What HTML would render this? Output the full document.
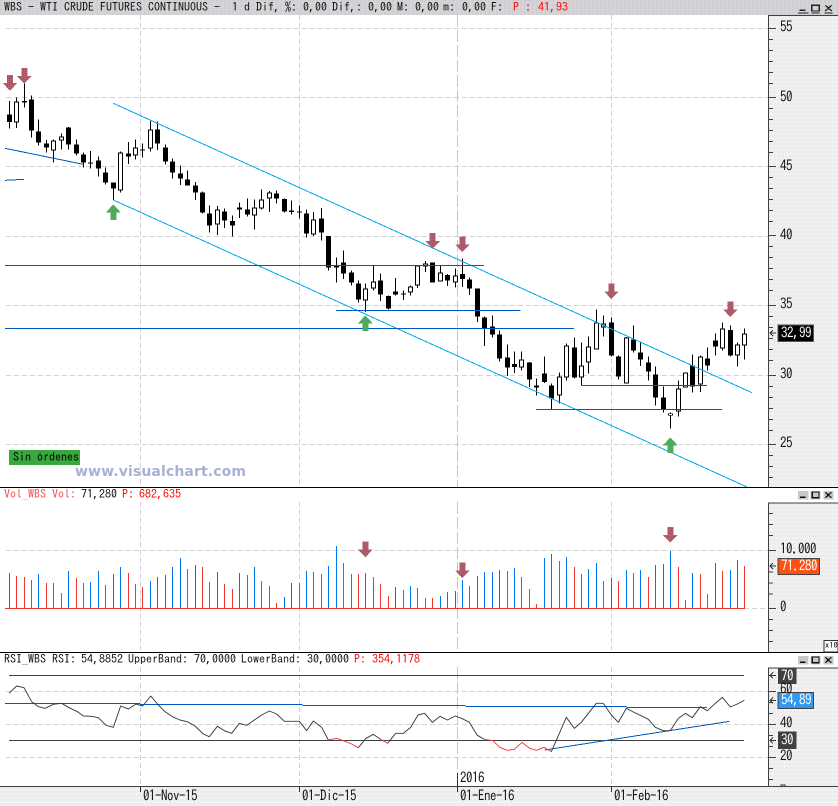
<!DOCTYPE html>
<html><head><meta charset="utf-8"><title>WBS chart</title>
<style>
html,body{margin:0;padding:0;background:#fff}
#c{position:relative;width:838px;height:806px;overflow:hidden;background:#fff}
svg{position:absolute;left:0;top:0}
.t{position:absolute;font-family:"IPAGothic","Liberation Mono",monospace;font-size:12px;line-height:14px;height:14px;white-space:pre;color:#111}
.a{font-size:13px;letter-spacing:-.5px;transform:scaleY(1.15);transform-origin:50% 50%}
.r{color:#f00}.s{color:#f05050}.w{color:#fff}
</style></head><body><div id="c">
<svg width="838" height="806" viewBox="0 0 2514 2418" shape-rendering="crispEdges">
<defs>
<pattern id="pa" patternUnits="userSpaceOnUse" width="12" height="12"><rect width="12" height="12" fill="#f0f0f2"/><rect x="3" width="3" height="3" fill="#e2e2ec"/><rect x="9" y="3" width="3" height="3" fill="#f0e4ea"/><rect y="6" width="3" height="3" fill="#fafafa"/><rect x="6" y="9" width="3" height="3" fill="#dedee6"/><rect x="6" y="3" width="3" height="3" fill="#fafafa"/></pattern>
<pattern id="pt" patternUnits="userSpaceOnUse" width="12" height="12"><rect width="12" height="12" fill="#d4d2d6"/><rect x="3" width="3" height="3" fill="#c8c8c8"/><rect x="9" y="3" width="3" height="3" fill="#dcd4e0"/><rect y="6" width="3" height="3" fill="#c8ccc8"/><rect x="6" y="9" width="3" height="3" fill="#e0dcdc"/></pattern>
<pattern id="pd" patternUnits="userSpaceOnUse" width="6" height="6"><rect width="6" height="6" fill="#a85462"/><rect width="3" height="3" fill="#c0707c"/></pattern>
<pattern id="pu" patternUnits="userSpaceOnUse" width="6" height="6"><rect width="6" height="6" fill="#44a454"/><rect width="3" height="3" fill="#68c078"/></pattern>
<polygon id="dn" points="-9,0 9,0 9,24 22,24 0,47 -22,24 -9,24" fill="url(#pd)"/>
<polygon id="up" points="0,0 22,24 9,24 9,47 -9,47 -9,24 -22,24" fill="url(#pu)"/>
</defs>
<!-- backgrounds -->
<rect x="0" y="0" width="2514" height="45" fill="url(#pt)"/>
<rect x="2304" y="45" width="210" height="1416" fill="url(#pa)"/>
<rect x="2304" y="1507" width="210" height="449" fill="url(#pa)"/>
<rect x="2304" y="2002" width="210" height="356" fill="url(#pa)"/>
<rect x="0" y="2358" width="2514" height="60" fill="url(#pa)"/>
<!-- grid -->
<path d="M18 85.5H2304M18 292.5H2304M18 499.5H2304M18 709.5H2304M18 916.5H2304M18 1126.5H2304M18 1333.5H2304M18 1651.5H2304M2232 1825.5H2304M18 2074.5H2304M18 2173.5H2304M18 2272.5H2304" fill="none" stroke="#d2d2d2" stroke-width="3" stroke-dasharray="15 9"/>
<path d="M421.5 45V1461M898.5 45V1461M1834.5 45V1461M421.5 1506V1950M898.5 1506V1950M1834.5 1506V1950M421.5 2001V2358M898.5 2001V2358M1834.5 2001V2358" fill="none" stroke="#d4ccd6" stroke-width="3" stroke-dasharray="15 9"/>
<path d="M1372.5 45V1461M1372.5 1506V1950M1372.5 2001V2358" fill="none" stroke="#c6c6c6" stroke-width="3" stroke-dasharray="36 9"/>
<!-- wicks -->
<path fill="none" stroke="#000" stroke-width="3" d="M28.5 303V386M49.5 292V384M73.5 250V323M94.5 286V413M115.5 358V437M139.5 420V458M160.5 418V488M184.5 400V449M205.5 381V449M229.5 418V467M250.5 458V503M271.5 453V506M295.5 469V530M316.5 502V554M340.5 547V600M361.5 455V578M385.5 426V492M406.5 418V479M427.5 430V473M451.5 363V455M472.5 365V450M496.5 433V494M517.5 475V536M541.5 496V555M562.5 511V557M586.5 546V600M607.5 574V640M628.5 616V698M652.5 618V705M673.5 626V684M697.5 646V709M718.5 608V654M742.5 595V650M763.5 598V689M784.5 568V628M808.5 573V636M829.5 571V611M853.5 595V637M874.5 601V644M898.5 616V656M919.5 628V713M940.5 636V708M964.5 624V722M985.5 708V812M1009.5 772V848M1030.5 751V837M1054.5 812V857M1075.5 841V908M1096.5 850V936M1120.5 796V872M1141.5 820V903M1165.5 886V929M1186.5 834V887M1210.5 871V900M1231.5 856V887M1252.5 796V864M1276.5 783V816M1297.5 787V848M1321.5 796V845M1342.5 822V858M1366.5 805V863M1387.5 775V861M1408.5 832V885M1432.5 865V966M1453.5 950V1038M1477.5 946V1012M1498.5 991V1085M1522.5 1033V1128M1543.5 1054V1119M1564.5 1054V1112M1588.5 1086V1161M1609.5 1136V1187M1633.5 1069V1149M1654.5 1150V1228M1678.5 1117V1210M1699.5 1030V1142M1723.5 1012V1136M1744.5 1027V1157M1765.5 1009V1120M1789.5 928V1048M1810.5 946V1010M1834.5 952V1069M1855.5 1066V1138M1879.5 1011V1151M1900.5 976V1057M1921.5 1024V1098M1945.5 1069V1142M1966.5 1099V1217M1990.5 1159V1237M2011.5 1237V1286M2035.5 1141V1250M2056.5 1117V1163M2077.5 1063V1178M2101.5 1067V1176M2122.5 1042V1112M2146.5 1000V1067M2167.5 967V1052M2191.5 976V1069M2212.5 1027V1100M2233.5 985V1079"/>
<!-- bodies -->
<path fill="#000" d="M21 343H36V366H21zM42 304H57V367H42zM66 303H81V308H66zM87 298H102V391H87zM108 394H123V428H108zM132 430H147V443H132zM153 421H168V451H153zM177 409H192V421H177zM198 382H213V434H198zM222 433H237V461H222zM243 463H258V488H243zM264 487H279V491H264zM288 481H303V506H288zM309 517H324V548H309zM333 547H348V566H333zM354 457H369V571H354zM378 460H393V470H378zM399 442H414V466H399zM420 448H435V452H420zM444 388H459V445H444zM465 388H480V431H465zM489 442H504V485H489zM510 484H525V518H510zM534 520H549V536H534zM555 538H570V557H555zM579 556H594V578H579zM600 577H615V638H600zM621 640H636V677H621zM645 628H660V673H645zM666 634H681V661H666zM690 663H705V677H690zM711 622H726V629H711zM735 628H750V644H735zM756 623H771V646H756zM777 598H792V625H777zM801 577H816V595H801zM822 580H837V596H822zM846 597H861V635H846zM867 632H882V636H867zM891 635H906V638H891zM912 640H927V700H912zM933 658H948V703H933zM957 655H972V697H957zM978 708H993V803H978zM1002 798H1017V803H1002zM1023 787H1038V821H1023zM1047 817H1062V848H1047zM1068 850H1083V899H1068zM1089 865H1104V902H1089zM1113 844H1128V866H1113zM1134 841H1149V884H1134zM1158 888H1173V926H1158zM1179 874H1194V884H1179zM1203 881H1218V884H1203zM1224 859H1239V878H1224zM1245 797H1260V857H1245zM1269 790H1284V799H1269zM1290 787H1305V848H1290zM1314 817H1329V844H1314zM1335 825H1350V842H1335zM1359 826H1374V848H1359zM1380 822H1395V837H1380zM1401 838H1416V866H1401zM1425 865H1440V950H1425zM1446 952H1461V985H1446zM1470 979H1485V1004H1470zM1491 1003H1506V1076H1491zM1515 1072H1530V1103H1515zM1536 1092H1551V1101H1536zM1557 1078H1572V1103H1557zM1581 1087H1596V1139H1581zM1602 1156H1617V1163H1602zM1626 1120H1641V1146H1626zM1647 1156H1662V1196H1647zM1671 1129H1686V1186H1671zM1692 1036H1707V1133H1692zM1716 1042H1731V1133H1716zM1737 1096H1752V1133H1737zM1758 1039H1773V1088H1758zM1782 967H1797V1048H1782zM1803 970H1818V982H1803zM1827 967H1842V1067H1827zM1848 1069H1863V1130H1848zM1872 1012H1887V1151H1872zM1893 1018H1908V1052H1893zM1914 1057H1929V1079H1914zM1938 1087H1953V1115H1938zM1959 1123H1974V1193H1959zM1983 1192H1998V1230H1983zM2004 1240H2019V1246H2004zM2028 1165H2043V1234H2028zM2049 1118H2064V1162H2049zM2070 1096H2085V1159H2070zM2094 1069H2109V1154H2094zM2115 1075H2130V1097H2115zM2139 1021H2154V1040H2139zM2160 985H2175V1046H2160zM2184 990H2199V1067H2184zM2205 1034H2220V1066H2205zM2226 1000H2241V1036H2226z"/>
<path fill="#fff" d="M45 307H54V364H45zM156 424H165V448H156zM180 412H189V418H180zM357 460H366V568H357zM402 445H411V463H402zM447 391H456V442H447zM648 631H657V670H648zM759 626H768V643H759zM780 601H789V622H780zM804 580H813V592H804zM936 661H945V700H936zM1092 868H1101V899H1092zM1116 847H1125V863H1116zM1227 862H1236V875H1227zM1248 800H1257V854H1248zM1272 793H1281V796H1272zM1317 820H1326V841H1317zM1362 829H1371V845H1362zM1560 1081H1569V1100H1560zM1605 1159H1614V1160H1605zM1674 1132H1683V1183H1674zM1695 1039H1704V1130H1695zM1740 1099H1749V1130H1740zM1761 1042H1770V1085H1761zM1785 970H1794V1045H1785zM1806 973H1815V979H1806zM1875 1015H1884V1148H1875zM2007 1242H2016V1245H2007zM2031 1168H2040V1231H2031zM2052 1121H2061V1159H2052zM2097 1072H2106V1151H2097zM2163 988H2172V1043H2163zM2208 1037H2217V1063H2208zM2229 1003H2238V1033H2229z"/>
<!-- trend lines -->
<path fill="none" stroke="#00a8e8" stroke-width="3" d="M340 310L2256 1178M340 600L2241 1461"/>
<path fill="none" stroke="#0058c0" stroke-width="3" d="M15 445L250 493M15 541L72 538M15 796.5H1452M15 985.5H1722M1008 931.5H1562M1744 1156.5H2121M1608 1228.5H2166"/>
<!-- arrows main -->
<use href="#dn" x="30" y="225"/><use href="#dn" x="73" y="204"/><use href="#dn" x="1298" y="699"/><use href="#dn" x="1387" y="709"/><use href="#dn" x="1834" y="850"/><use href="#dn" x="2191" y="904"/>
<use href="#up" x="340" y="613"/><use href="#up" x="1096" y="946"/><use href="#up" x="2011" y="1312"/>
<rect x="27" y="1350" width="213" height="45" fill="#38a83c"/>
<!-- volume bars -->
<g transform="translate(0,1455)" fill="none" stroke-width="3">
<path stroke="#0078f0" d="M28.5 264V370M115.5 267V370M205.5 258V370M271.5 291V370M295.5 258V370M340.5 267V370M361.5 246V370M451.5 288V370M472.5 276V370M496.5 270V370M517.5 246V370M541.5 219V370M586.5 240V370M652.5 261V370M718.5 264V370M763.5 246V370M853.5 336V370M874.5 294V370M919.5 258V370M985.5 243V370M1009.5 183V370M1096.5 264V370M1186.5 306V370M1231.5 303V370M1321.5 333V370M1342.5 321V370M1366.5 318V370M1387.5 285V370M1432.5 273V370M1453.5 261V370M1477.5 261V370M1498.5 255V370M1543.5 249V370M1633.5 219V370M1654.5 207V370M1699.5 216V370M1765.5 252V370M1789.5 234V370M1834.5 279V370M1879.5 255V370M1921.5 255V370M1966.5 240V370M1990.5 237V370M2011.5 198V370M2077.5 264V370M2146.5 234V370M2191.5 255V370M2212.5 225V370"/>
<path stroke="#f03830" d="M49.5 273V370M73.5 276V370M94.5 285V370M139.5 294V370M160.5 294V370M184.5 324V370M229.5 279V370M250.5 294V370M316.5 300V370M385.5 264V370M406.5 297V370M427.5 306V370M562.5 252V370M607.5 246V370M628.5 291V370M673.5 297V370M697.5 312V370M742.5 270V370M784.5 288V370M808.5 303V370M829.5 354V370M898.5 294V370M940.5 261V370M964.5 267V370M1030.5 234V370M1054.5 267V370M1075.5 267V370M1120.5 276V370M1141.5 297V370M1165.5 333V370M1210.5 315V370M1252.5 309V370M1276.5 339V370M1297.5 339V370M1408.5 303V370M1522.5 258V370M1564.5 276V370M1588.5 312V370M1609.5 357V370M1678.5 228V370M1723.5 246V370M1744.5 267V370M1810.5 288V370M1855.5 288V370M1900.5 264V370M1945.5 276V370M2035.5 246V370M2056.5 345V370M2101.5 267V370M2122.5 327V370M2167.5 258V370M2233.5 243V370M15 370.5H2235"/>
</g>
<use href="#dn" x="1096" y="1625"/><use href="#dn" x="1387" y="1687"/><use href="#dn" x="2011" y="1581"/>
<!-- RSI -->
<path fill="none" stroke="#404040" stroke-width="3" d="M27 2026.5H2232M27 2221.5H2232"/>
<path fill="none" stroke="#0058c0" stroke-width="3" d="M15 2110.5H420M420 2113.5H908M908 2116.5H1396M1396 2119.5H1879M1879 2122.5H2121M1634 2250L2189 2164"/>
<g shape-rendering="auto" fill="none" stroke-width="2.8" stroke-linejoin="round">
<g transform="translate(0,1950)">
<polyline stroke="#383838" points="27,130 50,108 72,113 95,155 115,170 135,175 160,163 185,160 205,172 232,185 250,198 275,199 295,203 318,226 340,232 362,168 385,177 408,162 428,168 452,138 475,165 495,185 517,200 540,210 562,215 585,228 610,252 628,260 652,229 675,243 695,250 718,220 740,226 763,210 785,195 808,183 830,192 853,214 898,214 920,242 940,213 965,232 985,270"/>
<polyline stroke="#f03830" points="985,270 1010,265 1030,272 1055,282 1075,293"/>
<polyline stroke="#383838" points="1075,293 1097,266 1120,253 1142,268"/>
<polyline stroke="#f03830" points="1142,268 1163,280"/>
<polyline stroke="#383838" points="1163,280 1187,250 1210,250 1232,232 1254,195"/>
</g>
<g transform="translate(1254,1950)">
<polyline stroke="#383838" points="0,195 20,190 43,217 66,199 88,210 112,198 133,206 154,217 178,256 199,268"/>
<polyline stroke="#f03830" points="199,268 225,272 245,292 268,301 289,298 312,277 335,295 355,301 378,292 400,305"/>
<polyline stroke="#383838" points="400,305 445,202 469,235 490,217 511,190 535,160 556,160 580,195 601,217 625,175 646,186 667,196 691,208 712,232 736,242 757,242 781,205 802,190 823,203 847,170 868,182 892,160 913,142 937,171 958,162 979,151"/>
</g>
</g>
<!-- panel borders -->
<path fill="none" stroke="#000" stroke-width="3" d="M0 1462.5H2514M0 1957.5H2514"/>
<path fill="none" stroke="#404040" stroke-width="3" d="M2305.5 45V1461M2304 46.5H2514M2305.5 1507V1956M2304 1508.5H2514M2305.5 2002V2358M2304 2003.5H2514M0 2359.5H2514"/>
<!-- axis ticks -->
<path fill="none" stroke="#404040" stroke-width="3" d="M2307 85.5h21M2307 292.5h21M2307 499.5h21M2307 706.5h21M2307 916.5h21M2307 1126.5h21M2307 1333.5h21M2307 118.5h12M2307 151.5h12M2307 184.5h12M2307 217.5h12M2307 250.5h12M2307 325.5h12M2307 358.5h12M2307 391.5h12M2307 424.5h12M2307 457.5h12M2307 532.5h12M2307 565.5h12M2307 598.5h12M2307 631.5h12M2307 664.5h12M2307 739.5h12M2307 772.5h12M2307 805.5h12M2307 838.5h12M2307 871.5h12M2307 949.5h12M2307 982.5h12M2307 1015.5h12M2307 1048.5h12M2307 1081.5h12M2307 1159.5h12M2307 1192.5h12M2307 1225.5h12M2307 1258.5h12M2307 1291.5h12M2307 1366.5h12M2307 1399.5h12M2307 1432.5h12
M2307 1651.5h21M2307 1825.5h21M2307 1540.5h12M2307 1573.5h12M2307 1606.5h12M2307 1716.5h12M2307 1749.5h12M2307 1782.5h12M2307 1858.5h12M2307 1891.5h12M2307 1924.5h12
M2307 2026.5h12M2307 2074.5h21M2307 2173.5h21M2307 2272.5h21M2307 2107.5h12M2307 2140.5h12M2307 2206.5h12M2307 2239.5h12M2307 2305.5h12M2307 2338.5h12"/>
<!-- clipped 0 label top at the RSI axis bottom -->
<path fill="none" stroke="#333" stroke-width="3" d="M2343 2357.5V2355.5H2355V2357.5"/>
<!-- time ticks -->
<path fill="none" stroke="#303030" stroke-width="3" d="M421.5 2361V2376M898.5 2361V2376M1372.5 2319V2376M1834.5 2361V2376"/>
<!-- value boxes -->
<rect x="2334" y="975" width="107" height="50" fill="#000" stroke="#555" stroke-width="3"/>
<rect x="2334" y="1675" width="124" height="48" fill="#ff5010" stroke="#444" stroke-width="3"/>
<rect x="2334" y="2005" width="55" height="47" fill="#404040"/>
<rect x="2334" y="2195" width="55" height="52" fill="#404040"/>
<rect x="2334" y="2077" width="107" height="48" fill="#3098f0" stroke="#444" stroke-width="3"/>
<rect x="2472" y="1922" width="42" height="34" fill="#fff" stroke="#333" stroke-width="3"/>
<!-- small arrows -->
<path fill="none" stroke="#333" stroke-width="3" d="M2310 999.5h18M2319 990.5l-9 9l9 9M2310 1698.5h18M2319 1689.5l-9 9l9 9M2310 2026.5h18M2319 2017.5l-9 9l9 9M2310 2101.5h18M2319 2092.5l-9 9l9 9M2310 2221.5h18M2319 2212.5l-9 9l9 9"/>
<!-- window buttons -->
<g fill="none" stroke="#222" stroke-width="3">
<path d="M2394 38.5h32M2434 38.5h25M2474 38.5h24"/>
<path fill="#222" stroke="none" d="M2399 28h17v5h-17z"/>
<rect x="2435" y="16" width="23" height="17" stroke-width="4"/>
<path d="M2476 16L2495 33M2495 16L2476 33" stroke-width="4"/>
</g>
<g id="vb">
<rect x="2394" y="1473" width="32" height="26" fill="#c8c8c8"/><rect x="2432" y="1473" width="30" height="26" fill="#c8c8c8"/><rect x="2470" y="1473" width="30" height="26" fill="#c8c8c8"/>
<path fill="#111" d="M2400 1489h17v5h-17z"/>
<rect x="2437" y="1476" width="20" height="17" fill="none" stroke="#111" stroke-width="4"/>
<path fill="none" stroke="#111" stroke-width="4" d="M2476 1477L2494 1493M2494 1477L2476 1493"/>
<rect x="2394" y="1968" width="32" height="26" fill="#c8c8c8"/><rect x="2432" y="1968" width="30" height="26" fill="#c8c8c8"/><rect x="2470" y="1968" width="30" height="26" fill="#c8c8c8"/>
<path fill="#111" d="M2400 1984h17v5h-17z"/>
<rect x="2437" y="1971" width="20" height="17" fill="none" stroke="#111" stroke-width="4"/>
<path fill="none" stroke="#111" stroke-width="4" d="M2476 1972L2494 1988M2494 1972L2476 1988"/>
</g>
</svg>
<!-- main title -->
<span class="t" style="left:4px;top:0">WBS - WTI CRUDE FUTURES CONTINUOUS -  1 d Dif,</span>
<span class="t" style="left:285px;top:0">%:</span><span class="t" style="left:303px;top:0">0,00</span><span class="t" style="left:332px;top:0">Dif,:</span><span class="t" style="left:368px;top:0">0,00</span><span class="t" style="left:397px;top:0">M:</span><span class="t" style="left:415px;top:0">0,00</span><span class="t" style="left:443px;top:0">m:</span><span class="t" style="left:462px;top:0">0,00</span><span class="t" style="left:491px;top:0">F:</span>
<span class="t r" style="left:513px;top:0">P :</span><span class="t r" style="left:538px;top:0">41,93</span>
<!-- price axis -->
<span class="t a" style="left:780px;top:20px">55</span><span class="t a" style="left:780px;top:90px">50</span><span class="t a" style="left:780px;top:159px">45</span><span class="t a" style="left:780px;top:228px">40</span><span class="t a" style="left:780px;top:297px">35</span><span class="t a" style="left:780px;top:367px">30</span><span class="t a" style="left:780px;top:436px">25</span>
<span class="t a w" style="left:781px;top:326px;">32,99</span>
<span class="t" style="left:13px;top:450px;color:#000">Sin órdenes</span>
<span class="t" style="left:75px;top:465px;font:bold 14px/14px 'DejaVu Sans',sans-serif;color:#a9b1d2;letter-spacing:.12px">www.visualchart.com</span>
<!-- volume -->
<span class="t s" style="left:4px;top:487px">Vol_WBS Vol:</span><span class="t" style="left:81px;top:487px">71,280</span><span class="t r" style="left:122px;top:487px">P:</span><span class="t r" style="left:139px;top:487px">682,635</span>
<span class="t a" style="left:780px;top:542px">10.000</span><span class="t a w" style="left:781px;top:559px">71.280</span><span class="t a" style="left:780px;top:600px">0</span>
<span class="t" style="left:825px;top:639px;font-size:8.5px;color:#000">x10</span>
<!-- RSI -->
<span class="t" style="left:4px;top:652px">RSI_WBS RSI:</span><span class="t" style="left:81px;top:652px">54,8852</span><span class="t" style="left:128px;top:652px">UpperBand:</span><span class="t" style="left:194px;top:652px">70,0000</span><span class="t" style="left:241px;top:652px">LowerBand:</span><span class="t" style="left:307px;top:652px">30,0000</span><span class="t r" style="left:354px;top:652px">P:</span><span class="t r" style="left:372px;top:652px">354,1178</span>
<span class="t a" style="left:780px;top:682px">60</span><span class="t a" style="left:780px;top:716px">40</span><span class="t a" style="left:780px;top:749px">20</span>
<span class="t a w" style="left:781px;top:669px">70</span><span class="t a w" style="left:781px;top:693px">54,89</span><span class="t a w" style="left:781px;top:733px">30</span>
<!-- time axis -->
<span class="t a" style="left:460px;top:771px">2016</span>
<span class="t a" style="left:143px;top:789px">01-Nov-15</span><span class="t a" style="left:302px;top:789px">01-Dic-15</span><span class="t a" style="left:460px;top:789px">01-Ene-16</span><span class="t a" style="left:614px;top:789px">01-Feb-16</span>
</div></body></html>
